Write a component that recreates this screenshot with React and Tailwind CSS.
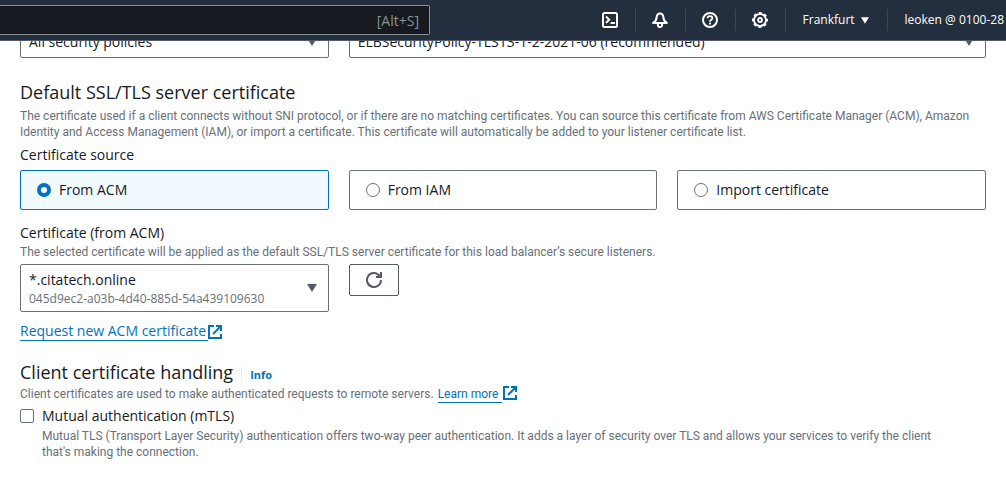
import { useState } from "react";

function Caret({ className }) {
  return (
    <svg viewBox="0 0 10 8" className={className} fill="currentColor" aria-hidden="true">
      <path d="M0 0h10L5 8z" />
    </svg>
  );
}

function ShellIcon() {
  return (
    <svg viewBox="0 0 16 16" className="size-4" fill="none" stroke="currentColor" strokeWidth="2" aria-hidden="true">
      <rect x="1" y="1" width="14" height="14" rx="1.5" />
      <path d="M4 4.5 7.2 7.7 4 10.9" />
      <path d="M8.5 11H13" />
    </svg>
  );
}

function BellIcon() {
  return (
    <svg viewBox="0 0 16 16" className="size-4" fill="none" stroke="currentColor" strokeWidth="2" strokeLinejoin="round" aria-hidden="true">
      <path d="M8 1.5C6 1.5 4.8 3.2 4.6 5.4 4.4 7.8 3.4 9.8 1.2 11h13.6c-2.2-1.2-3.2-3.2-3.4-5.6C11.2 3.2 10 1.5 8 1.5z" />
      <path d="M5.9 11v1.9A2.1 2.1 0 0 0 8 15a2.1 2.1 0 0 0 2.1-2.1V11" />
    </svg>
  );
}

function HelpIcon() {
  return (
    <svg viewBox="0 0 16 16" className="size-4" fill="none" stroke="currentColor" strokeWidth="2" aria-hidden="true">
      <circle cx="8" cy="8" r="7" />
      <path d="M5.6 6.3C5.6 5 6.6 4.2 8 4.2s2.4.8 2.4 2c0 1.6-2.4 1.6-2.4 3.5" strokeWidth="1.8" />
      <path d="M8 10.7v1.8" />
    </svg>
  );
}

function GearIcon() {
  return (
    <svg viewBox="0 0 16 16" className="size-4" fill="none" stroke="currentColor" aria-hidden="true">
      <circle cx="8" cy="8" r="6" strokeWidth="1.8" />
      <circle cx="8" cy="8" r="7.1" strokeWidth="1.8" strokeDasharray="2.9 2.676" strokeDashoffset="1.45" />
      <circle cx="8" cy="8" r="2" strokeWidth="1.8" />
    </svg>
  );
}

function RefreshIcon() {
  return (
    <svg viewBox="0 0 16 16" className="size-4" fill="none" stroke="currentColor" strokeWidth="2" aria-hidden="true">
      <path d="M15 8a7 7 0 1 1-2.2-5.1L15 5" />
      <path d="M15 0v5h-5" />
    </svg>
  );
}

function ExternalIcon() {
  return (
    <svg viewBox="0 0 14 14" className="size-3.5 shrink-0" fill="none" stroke="currentColor" strokeWidth="2" aria-hidden="true">
      <path d="M6 1H1v12h12V9" />
      <path d="M8 1h5v5" />
      <path d="M13 1 5 9" />
    </svg>
  );
}

function HeaderButton({ label, children }) {
  return (
    <button type="button" aria-label={label} className="flex h-[22px] w-[50px] items-center justify-center border-r border-[#414750]">
      {children}
    </button>
  );
}

function Hint({ className, children }) {
  return (
    <p className={`font-['Roboto','Open_Sans',sans-serif] text-[12px] leading-4 text-[#687078] ${className}`}>{children}</p>
  );
}

function PolicySelect({ label, value, className }) {
  return (
    <div className={`relative text-[#545b64] ${className}`}>
      <select aria-label={label} className="h-8 w-full appearance-none rounded-xs border border-[#687078] bg-white px-2 text-[14px] text-[#16191f]">
        <option>{value}</option>
      </select>
      <Caret className="pointer-events-none absolute top-3 right-3 h-2 w-2.5" />
    </div>
  );
}

function SourceTile({ label, checked, onChange }) {
  return (
    <label
      className={`flex h-10 items-center gap-2 rounded-xs border px-4 text-[14px] ${
        checked ? "border-[#0073bb] bg-[#f1faff]" : "border-[#687078] bg-white"
      }`}
    >
      <input
        type="radio"
        name="source"
        checked={checked}
        onChange={onChange}
        className="size-3.5 appearance-none rounded-full border border-[#687078] bg-white checked:border-4 checked:border-[#0073bb]"
      />
      {label}
    </label>
  );
}

const sources = ["From ACM", "From IAM", "Import certificate"];

export default function App() {
  const [source, setSource] = useState("From ACM");
  const [mtls, setMtls] = useState(false);

  return (
    <div className="overflow-hidden bg-white font-['Open_Sans','Noto_Sans',sans-serif] text-[14px] leading-5 text-[#16191f]">
      <header className="relative z-10 flex h-[41px] items-center justify-between border-b border-[#545b64] bg-[#232f3e] text-white">
        <input
          type="text"
          aria-label="Search"
          placeholder="[Alt+S]"
          className="h-[30px] w-[430px] rounded-r-xs border border-l-0 border-[#879596] bg-[#16191f] pr-2.5 text-right text-[14px] placeholder:text-[#879596]"
        />
        <nav className="flex items-center text-[12px]">
          <HeaderButton label="CloudShell"><ShellIcon /></HeaderButton>
          <HeaderButton label="Notifications"><BellIcon /></HeaderButton>
          <HeaderButton label="Help"><HelpIcon /></HeaderButton>
          <HeaderButton label="Settings"><GearIcon /></HeaderButton>
          <button type="button" className="flex h-[22px] items-center gap-1.5 border-r border-[#414750] pr-[18px] pl-[17px]">
            Frankfurt
            <Caret className="h-[7px] w-2" />
          </button>
          <button type="button" className="h-[22px] pr-0.5 pl-[17px] whitespace-nowrap">leoken @ 0100-28</button>
        </nav>
      </header>

      <main className="-mt-[15px] px-5 pb-6">
        <div className="grid grid-cols-3 gap-5">
          <PolicySelect label="Policy filter" value="All security policies" className="" />
          <PolicySelect label="Security policy" value="ELBSecurityPolicy-TLS13-1-2-2021-06 (recommended)" className="col-span-2" />
        </div>

        <h2 className="mt-[23px] text-[18px] leading-[22px]">Default SSL/TLS server certificate</h2>
        <Hint className="mt-[5px]">
          The certificate used if a client connects without SNI protocol, or if there are no matching certificates. You can source this certificate from AWS Certificate Manager (ACM), Amazon
          <br />
          Identity and Access Management (IAM), or import a certificate. This certificate will automatically be added to your listener certificate list.
        </Hint>

        <fieldset className="mt-[5px]">
          <legend>Certificate source</legend>
          <div className="mt-[5px] grid grid-cols-3 gap-5">
            {sources.map((name) => (
              <SourceTile key={name} label={name} checked={source === name} onChange={() => setSource(name)} />
            ))}
          </div>
        </fieldset>

        <label htmlFor="certificate" className="mt-[13px] block">Certificate (from ACM)</label>
        <Hint className="mt-px">
          The selected certificate will be applied as the default SSL/TLS server certificate for this load balancer’s secure listeners.
        </Hint>
        <div className="mt-1 grid grid-cols-3 items-start gap-5">
          <div className="flex h-12 items-center rounded-xs border border-[#687078] pr-[11px] pl-2 text-[#545b64]">
            <div className="min-w-0 flex-1">
              <select id="certificate" className="block h-5 w-full appearance-none bg-white text-[14px] text-[#16191f]">
                <option>*.citatech.online</option>
              </select>
              <p className="mt-px text-[12px] leading-4 text-[#687078]">045d9ec2-a03b-4d40-885d-54a439109630</p>
            </div>
            <Caret className="h-2 w-2.5" />
          </div>
          <button type="button" aria-label="Refresh certificates" className="flex h-8 w-[50px] items-center justify-center rounded-xs border border-[#545b64] text-[#545b64]">
            <RefreshIcon />
          </button>
        </div>
        <a href="#request" className="mt-2.5 flex w-fit items-center text-[#0073bb]">
          <span className="border-b border-[#0073bb] pr-0.5 leading-[18px]">Request new ACM certificate</span>
          <ExternalIcon />
        </a>

        <h2 className="mt-5 flex items-center text-[18px] leading-[22px]">
          Client certificate handling
          <a href="#info" className="ml-2 self-end border-l border-[#eaeded] pl-2 text-[11px] leading-4 font-bold text-[#0073bb]">Info</a>
        </h2>
        <Hint className="mt-[3px] flex items-start">
          Client certificates are used to make authenticated requests to remote servers.
          <a href="#learn" className="ml-1 flex items-start gap-px text-[#0073bb]">
            <span className="border-b border-[#0073bb] pr-1">Learn more</span>
            <ExternalIcon />
          </a>
        </Hint>

        <div className="mt-[3px] flex gap-2">
          <input
            id="mtls"
            type="checkbox"
            checked={mtls}
            onChange={(e) => setMtls(e.target.checked)}
            className="mt-[3px] size-3.5 shrink-0 appearance-none rounded-xs border border-[#687078] bg-white checked:bg-[#0073bb]"
          />
          <div>
            <label htmlFor="mtls" className="block">Mutual authentication (mTLS)</label>
            <Hint className="mt-0.5">
              Mutual TLS (Transport Layer Security) authentication offers two-way peer authentication. It adds a layer of security over TLS and allows your services to verify the client
              <br />
              that's making the connection.
            </Hint>
          </div>
        </div>
      </main>
    </div>
  );
}
